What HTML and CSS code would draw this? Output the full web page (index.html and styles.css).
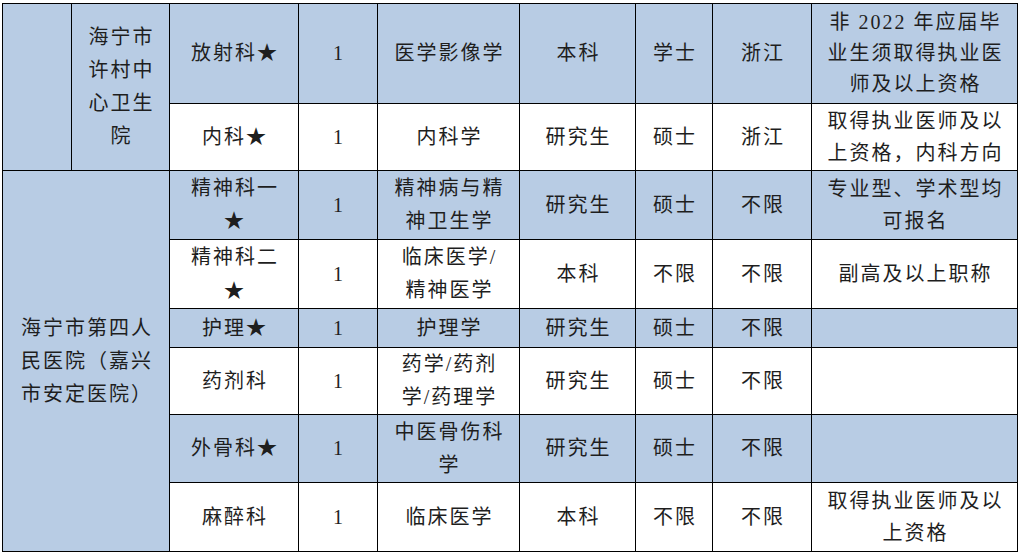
FILE: index.html
```html
<!DOCTYPE html>
<html lang="zh-CN">
<head>
<meta charset="utf-8">
<title>招聘岗位表</title>
<link rel="stylesheet" href="styles.css">
</head>
<body>
<table class="jobs">
  <colgroup>
    <col class="c1"><col class="c2"><col class="c3"><col class="c4"><col class="c5">
    <col class="c6"><col class="c7"><col class="c8"><col class="c9">
  </colgroup>
  <tbody>
    <tr class="r1 blue">
      <td rowspan="2" class="blue"></td>
      <td rowspan="2" class="blue">海宁市<br>许村中<br>心卫生<br>院</td>
      <td>放射科★</td>
      <td>1</td>
      <td>医学影像学</td>
      <td>本科</td>
      <td>学士</td>
      <td>浙江</td>
      <td class="note tight">非 2022 年应届毕<br>业生须取得执业医<br>师及以上资格</td>
    </tr>
    <tr class="r2 white">
      <td>内科★</td>
      <td>1</td>
      <td>内科学</td>
      <td>研究生</td>
      <td>硕士</td>
      <td>浙江</td>
      <td class="note">取得执业医师及以<br>上资格，内科方向</td>
    </tr>
    <tr class="r3 blue">
      <td colspan="2" rowspan="6" class="blue hosp">海宁市第四人<br>民医院（嘉兴<br>市安定医院）</td>
      <td>精神科一<br>★</td>
      <td>1</td>
      <td>精神病与精<br>神卫生学</td>
      <td>研究生</td>
      <td>硕士</td>
      <td>不限</td>
      <td class="note">专业型、学术型均<br>可报名</td>
    </tr>
    <tr class="r4 white">
      <td class="wide">精神科二<br>★</td>
      <td>1</td>
      <td>临床医学/<br>精神医学</td>
      <td>本科</td>
      <td>不限</td>
      <td>不限</td>
      <td class="note">副高及以上职称</td>
    </tr>
    <tr class="r5 blue">
      <td>护理★</td>
      <td>1</td>
      <td>护理学</td>
      <td>研究生</td>
      <td>硕士</td>
      <td>不限</td>
      <td class="note"></td>
    </tr>
    <tr class="r6 white">
      <td>药剂科</td>
      <td>1</td>
      <td>药学/药剂<br>学/药理学</td>
      <td>研究生</td>
      <td>硕士</td>
      <td>不限</td>
      <td class="note"></td>
    </tr>
    <tr class="r7 blue">
      <td>外骨科★</td>
      <td>1</td>
      <td>中医骨伤科<br>学</td>
      <td>研究生</td>
      <td>硕士</td>
      <td>不限</td>
      <td class="note"></td>
    </tr>
    <tr class="r8 white">
      <td>麻醉科</td>
      <td>1</td>
      <td>临床医学</td>
      <td>本科</td>
      <td>不限</td>
      <td>不限</td>
      <td class="note">取得执业医师及以<br>上资格</td>
    </tr>
    <tr class="r9 blue">
      <td colspan="2"></td>
      <td></td><td></td><td></td><td></td><td></td><td></td><td></td>
    </tr>
  </tbody>
</table>
</body>
</html>
```

FILE: styles.css
```css
html, body {
  margin: 0;
  padding: 0;
  background: #ffffff;
  overflow: hidden;
}

body {
  padding: 3px 0 0 2px;
  height: 549px;
}

.jobs {
  border-collapse: collapse;
  table-layout: fixed;
  width: 1015px;
  font-family: "Liberation Serif", "Noto Sans CJK SC", serif;
  font-size: 20px;
  color: #1e1e1e;
}

.c1 { width: 69px; }
.c2 { width: 98px; }
.c3 { width: 129px; }
.c4 { width: 79px; }
.c5 { width: 142px; }
.c6 { width: 116px; }
.c7 { width: 77px; }
.c8 { width: 99px; }
.c9 { width: 206px; }

.jobs td {
  border: 1px solid #000;
  padding: 0 0 0 2px;
  text-align: center;
  vertical-align: middle;
  line-height: 33px;
  letter-spacing: 2px;
  white-space: nowrap;
  overflow: hidden;
}

.blue td, td.blue {
  background: #b8cce4;
}

.white td {
  background: #ffffff;
}

.white td.blue {
  background: #b8cce4;
}

.jobs td.note {
  line-height: 32px;
}

.jobs td.tight {
  line-height: 31px;
}

.jobs td.wide {
  line-height: 34px;
}

.r1 { height: 100px; }
.r2 { height: 67px; }
.r3 { height: 69px; }
.r4 { height: 68px; }
.r5 { height: 39px; }
.r6 { height: 67px; }
.r7 { height: 68px; }
.r8 { height: 69px; }

.r9 { height: 1px; }
.jobs .r9 td {
  line-height: 0;
  height: 1px;
}
```
